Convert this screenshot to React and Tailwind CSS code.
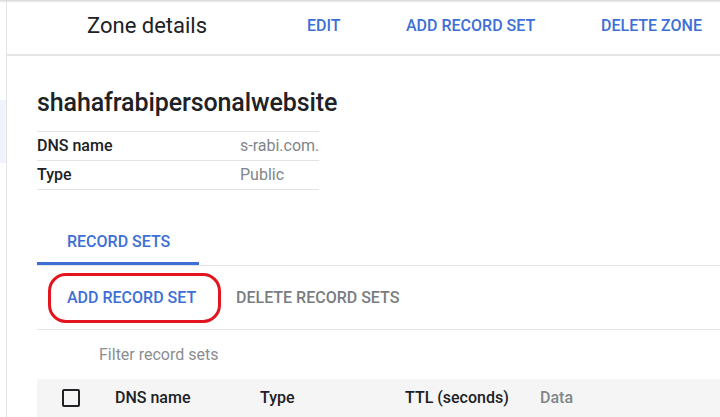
export default function App() {
  return (
    <div className="relative flex h-[417px] w-[720px] overflow-hidden bg-white font-['Roboto',sans-serif] text-[#202124]">
      {/* top shadow */}
      <div className="absolute left-0 right-0 top-0 h-[3px] bg-gradient-to-b from-[#d7d7d7] to-transparent" />

      {/* sidebar stub */}
      <div className="flex w-[7px] shrink-0 flex-col border-r border-[#e3e3e3]">
        <div className="h-[100px]" />
        <div className="h-[63px] bg-[#eef3fc]" />
      </div>

      <div className="flex min-w-0 flex-1 flex-col">
        {/* header */}
        <div className="flex h-[56px] shrink-0 items-center border-b-2 border-[#e6e6e6] pb-[3px]">
          <h1 className="ml-[80px] w-[220px] text-[22px] font-normal">Zone details</h1>
          <div className="flex items-center text-[16px] font-medium text-[#3d6fd6]">
            <span className="w-[99px]">EDIT</span>
            <span className="w-[195px]">ADD RECORD SET</span>
            <span>DELETE ZONE</span>
          </div>
        </div>

        <div className="flex flex-col pl-[30px]">
          <h2 className="mt-[32px] text-[25px] font-medium leading-[30px] tracking-[-0.1px]">
            shahafrabipersonalwebsite
          </h2>

          <div className="mt-[13px] w-[282px] border-t border-[#e3e3e3] text-[16px] whitespace-nowrap">
            <div className="flex h-[29px] items-center border-b border-[#e3e3e3]">
              <span className="w-[203px] shrink-0 font-medium">DNS name</span>
              <span className="text-[#80868b]">s-rabi.com.</span>
            </div>
            <div className="flex h-[29px] items-center border-b border-[#e3e3e3]">
              <span className="w-[203px] shrink-0 font-medium">Type</span>
              <span className="text-[#80868b]">Public</span>
            </div>
          </div>

          {/* tabs */}
          <div className="mt-[32px] flex border-b border-[#e3e3e3]">
            <div className="flex h-[43px] w-[162px] items-center border-b-[3px] border-[#3d6fd6] pl-[30px] text-[16px] font-medium text-[#3d6fd6]">
              RECORD SETS
            </div>
          </div>

          {/* actions */}
          <div className="flex h-[64px] items-center border-b border-[#e3e3e3] text-[16px] font-medium">
            <div className="ml-[11px] flex h-[50px] w-[173px] items-center rounded-[18px] border-[3px] border-[#e3141e] pl-[16px] text-[#3d6fd6]">
              ADD RECORD SET
            </div>
            <span className="ml-[15px] text-[#7a7d80]">DELETE RECORD SETS</span>
          </div>

          <div className="flex h-[49px] items-center pl-[62px] text-[16px] text-[#8a8d91]">
            Filter record sets
          </div>

          {/* table head */}
          <div className="flex h-[38px] items-center bg-[#f5f5f5] text-[16px] font-medium whitespace-nowrap">
            <div className="ml-[25px] h-[18px] w-[18px] shrink-0 rounded-[2px] border-2 border-[#202124]" />
            <span className="ml-[35px] w-[145px]">DNS name</span>
            <span className="w-[145px]">Type</span>
            <span className="w-[135px]">TTL (seconds)</span>
            <span className="text-[#80868b]">Data</span>
          </div>
        </div>
      </div>
    </div>
  );
}
